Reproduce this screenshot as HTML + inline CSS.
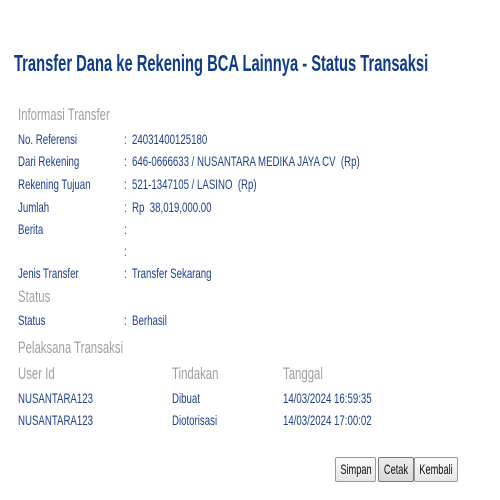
<!DOCTYPE html>
<html><head><style>
body{margin:0;width:500px;height:500px;background:#fff;position:relative;overflow:hidden;font-family:"Liberation Sans",sans-serif}
.t{position:absolute;white-space:nowrap;transform:scaleX(0.69);transform-origin:0 50%;line-height:1}
.title{left:14px;top:52px;font-size:23px;font-weight:bold;color:#0f3b8f;transform:scaleX(0.64)}
.h{font-size:17px;color:#a0a0a0;transform:scaleX(0.67)}
.l{font-size:14px;color:#1d3f91}
.b{position:absolute;height:23px;border:1px solid #9a9a9a;border-radius:2px;background:linear-gradient(#fbfbfb,#e6e6e6);font-size:14px;color:#111}
.b span{position:absolute;left:50%;top:4px;transform:translateX(-50%) scaleX(0.66);white-space:nowrap;line-height:1}
</style></head><body>
<div class="t title">Transfer Dana ke Rekening BCA Lainnya - Status Transaksi</div>
<div class="t h" style="left:18px;top:106px">Informasi Transfer</div>
<div class="t l" style="left:18px;top:132px">No. Referensi</div>
<div class="t l" style="left:18px;top:154px">Dari Rekening</div>
<div class="t l" style="left:18px;top:177px">Rekening Tujuan</div>
<div class="t l" style="left:18px;top:200px">Jumlah</div>
<div class="t l" style="left:18px;top:222px">Berita</div>
<div class="t l" style="left:18px;top:266px">Jenis Transfer</div>
<div class="t l" style="left:124px;top:132px">:&nbsp; 24031400125180</div>
<div class="t l" style="left:124px;top:154px">:&nbsp; 646-0666633 / NUSANTARA MEDIKA JAYA CV&nbsp; (Rp)</div>
<div class="t l" style="left:124px;top:177px">:&nbsp; 521-1347105 / LASINO&nbsp; (Rp)</div>
<div class="t l" style="left:124px;top:200px">:&nbsp; Rp&nbsp; 38,019,000.00</div>
<div class="t l" style="left:124px;top:222px">:</div>
<div class="t l" style="left:124px;top:244px">:</div>
<div class="t l" style="left:124px;top:266px">:&nbsp; Transfer Sekarang</div>
<div class="t h" style="left:18px;top:288px">Status</div>
<div class="t l" style="left:18px;top:313px">Status</div>
<div class="t l" style="left:124px;top:313px">:&nbsp; Berhasil</div>
<div class="t h" style="left:18px;top:339px">Pelaksana Transaksi</div>
<div class="t h" style="left:18px;top:365px">User Id</div>
<div class="t h" style="left:172px;top:365px">Tindakan</div>
<div class="t h" style="left:283px;top:365px">Tanggal</div>
<div class="t l" style="left:18px;top:391px">NUSANTARA123</div>
<div class="t l" style="left:172px;top:391px">Dibuat</div>
<div class="t l" style="left:283px;top:391px">14/03/2024 16:59:35</div>
<div class="t l" style="left:18px;top:413px">NUSANTARA123</div>
<div class="t l" style="left:172px;top:413px">Diotorisasi</div>
<div class="t l" style="left:283px;top:413px">14/03/2024 17:00:02</div>
<div class="b" style="left:335px;top:457px;width:39px"><span>Simpan</span></div>
<div class="b" style="left:378px;top:457px;width:34px;background:linear-gradient(#eee,#d8d8d8);border-color:#777"><span>Cetak</span></div>
<div class="b" style="left:414px;top:457px;width:42px"><span>Kembali</span></div>
</body></html>
